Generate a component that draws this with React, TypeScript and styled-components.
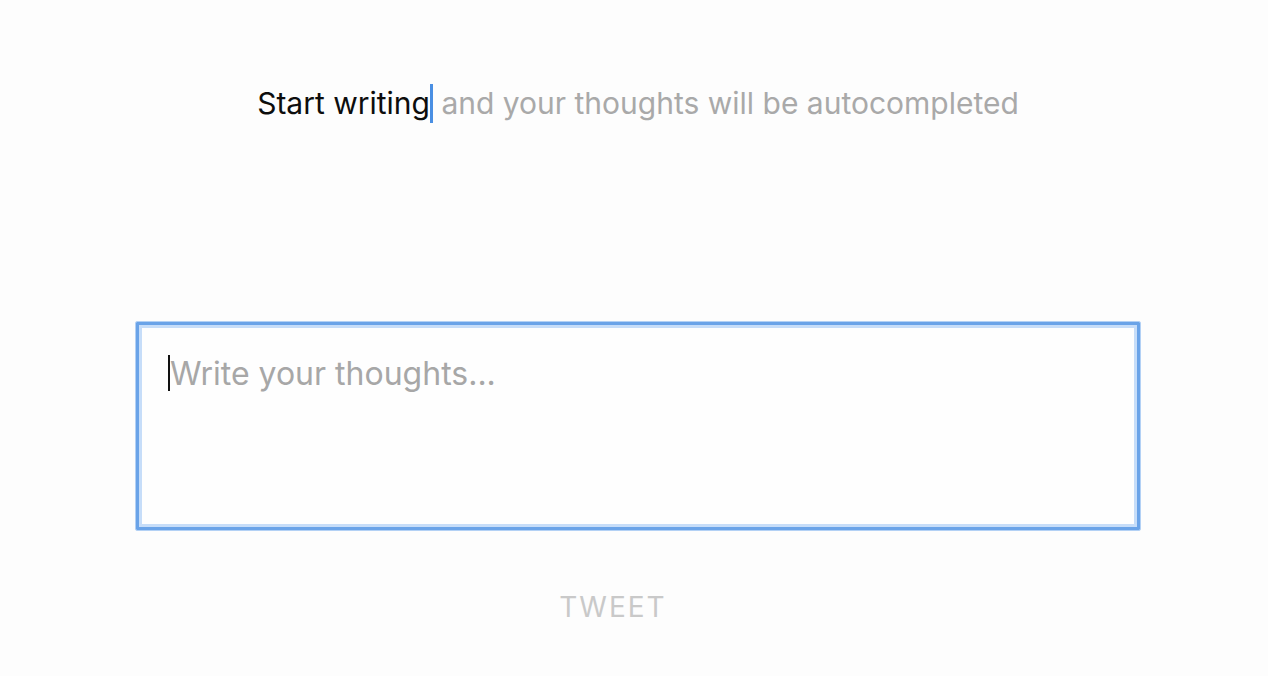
import React from "react";
import styled, { createGlobalStyle } from "styled-components";

const Global = createGlobalStyle`
  html, body { margin: 0; padding: 0; background: #fdfdfd; }
  body { font-family: Inter, "Helvetica Neue", Arial, sans-serif; -webkit-font-smoothing: antialiased; }
`;

const Page = styled.div`
  width: 1268px;
  height: 676px;
  display: flex;
  flex-direction: column;
  box-sizing: border-box;
  padding-left: 135px;
  overflow: hidden;
`;

const Column = styled.div`
  width: 1006px;
  display: flex;
  flex-direction: column;
  align-items: center;
`;

const Headline = styled.div`
  margin-top: 82px;
  height: 42px;
  display: flex;
  align-items: center;
  font-size: 30px;
  white-space: pre;
`;

const Typed = styled.span`
  color: #0d0d0d;
`;

const Suggestion = styled.span`
  color: #a9a9a9;
`;

const Caret = styled.span<{ $color: string; $w: number; $h: number }>`
  display: inline-block;
  flex: none;
  width: ${(p) => p.$w}px;
  height: ${(p) => p.$h}px;
  background: ${(p) => p.$color};
`;

const Composer = styled.div`
  margin-top: 197px;
  width: 1006px;
  height: 210px;
  box-sizing: border-box;
  border: 1px solid #b3d1f5;
  box-shadow: inset 0 0 0 3px #6aa3e8, inset 0 0 0 6px #c6ddf9;
  border-radius: 2px;
  background: #fefefe;
  align-self: stretch;
  padding: 33px 0 0 32px;
`;

const Placeholder = styled.div`
  display: flex;
  align-items: center;
  font-size: 32px;
  color: #a7a7a7;
  height: 36px;
`;

const TweetButton = styled.button`
  margin-top: 59px;
  margin-right: 50px;
  border: none;
  background: transparent;
  font-family: Inter, "Helvetica Neue", Arial, sans-serif;
  font-size: 28px;
  letter-spacing: 2px;
  color: #c9c9c9;
  padding: 0;
  cursor: pointer;
`;

export default function App() {
  return (
    <>
      <Global />
      <Page>
        <Column>
          <Headline>
            <Typed>Start writing</Typed>
            <Caret $color="#4a8fe3" $w={3} $h={39} />
            <Suggestion> and your thoughts will be autocompleted</Suggestion>
          </Headline>
          <Composer>
            <Placeholder>
              <Caret $color="#111" $w={2} $h={36} />
              <span>Write your thoughts...</span>
            </Placeholder>
          </Composer>
          <TweetButton>TWEET</TweetButton>
        </Column>
      </Page>
    </>
  );
}
